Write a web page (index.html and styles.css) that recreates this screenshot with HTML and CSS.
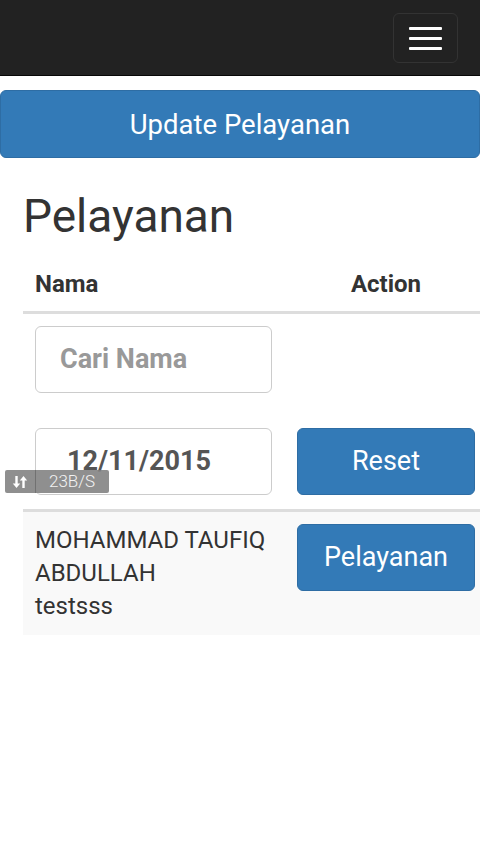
FILE: index.html
```html
<!DOCTYPE html>
<html>
<head>
<meta charset="utf-8">
<link rel="stylesheet" href="styles.css">
</head>
<body>
<nav class="navbar">
  <button class="toggle" aria-label="menu">
    <span class="bar"></span><span class="bar"></span><span class="bar"></span>
  </button>
</nav>
<button class="btn btn-block">Update Pelayanan</button>
<main class="container">
  <h1 class="title">Pelayanan</h1>
  <table class="table">
    <thead>
      <tr class="head-row">
        <th class="col-name">Nama</th>
        <th class="col-action">Action</th>
      </tr>
      <tr class="filter-row1">
        <td><input class="field" type="text" placeholder="Cari Nama"></td>
        <td></td>
      </tr>
      <tr class="filter-row2">
        <td><input class="field field-date" type="text" value="12/11/2015"></td>
        <td><button class="btn btn-row">Reset</button></td>
      </tr>
    </thead>
    <tbody>
      <tr class="data-row">
        <td class="name-cell">MOHAMMAD TAUFIQ<br>ABDULLAH<br>testsss</td>
        <td><button class="btn btn-row">Pelayanan</button></td>
      </tr>
    </tbody>
  </table>
</main>
<div class="netspeed">
  <span class="ns-icon">
    <svg width="16" height="14" viewBox="0 0 16 14" aria-hidden="true">
      <path d="M4.5 1v9" stroke="#fff" stroke-width="2.4" fill="none"/>
      <path d="M0.8 8.6L4.5 13L8.2 8.6Z" fill="#fff"/>
      <path d="M11.5 13V4" stroke="#fff" stroke-width="2.4" fill="none"/>
      <path d="M7.8 5.4L11.5 1L15.2 5.4Z" fill="#fff"/>
    </svg>
  </span>
  <span class="ns-text">23B/S</span>
</div>
</body>
</html>
```
FILE: styles.css
```css
html, body {
  margin: 0;
  padding: 0;
  background: #fff;
  overflow-x: hidden;
}
body {
  font-family: Roboto, "Noto Sans", sans-serif;
  color: #333;
  width: 480px;
  position: relative;
  min-height: 854px;
}
.navbar {
  height: 75px;
  background: #222;
  border-bottom: 1px solid #080808;
  display: flex;
  justify-content: flex-end;
  align-items: flex-start;
  padding-right: 22px;
}
.toggle {
  margin-top: 13px;
  width: 65px;
  height: 50px;
  background: transparent;
  border: 1px solid #333;
  border-radius: 6px;
  display: flex;
  flex-direction: column;
  align-items: center;
  justify-content: center;
  gap: 7px;
  padding: 0;
}
.bar {
  display: block;
  width: 33px;
  height: 3px;
  background: #fff;
  border-radius: 1px;
}
.btn {
  font-family: Roboto, "Noto Sans", sans-serif;
  background: #337ab7;
  border: 1px solid #2e6da4;
  color: #fff;
  border-radius: 6px;
  font-size: 27px;
  padding: 0;
  cursor: pointer;
}
.btn-block {
  display: block;
  width: 480px;
  height: 68px;
  margin-top: 14px;
  font-size: 27.5px;
}
.container {
  padding-left: 23px;
}
.title {
  margin: 33px 0 0;
  font-size: 46px;
  font-weight: 400;
  line-height: 1.1;
  color: #333;
}
.table {
  margin-top: 15px;
  width: 464px;
  border-collapse: collapse;
  border-spacing: 0;
  font-size: 24px;
}
.table th, .table td {
  padding: 12px;
  vertical-align: top;
  text-align: left;
}
.col-name { width: 238px; }
.col-action { text-align: center !important; }
.head-row th {
  font-weight: 700;
  line-height: 30px;
  border-bottom: 3px solid #ddd;
}
.filter-row1 td { padding-bottom: 12px; }
.filter-row2 td {
  padding-top: 23px;
  padding-bottom: 14px;
}
.field {
  box-sizing: border-box;
  width: 237px;
  height: 67px;
  border: 1px solid #ccc;
  border-radius: 6px;
  padding: 0 0 0 24px;
  font-family: Roboto, "Noto Sans", sans-serif;
  font-size: 27px;
  font-weight: 700;
  color: #555;
  display: block;
  background: #fff;
}
.field::placeholder { color: #999; }
.field-date { padding-left: 31px; }
.btn-row {
  width: 178px;
  height: 67px;
  display: block;
}
tbody {
  border-top: 3px solid #ddd;
}
.data-row { background: #f9f9f9; }
.data-row td { line-height: 33px; }
.name-cell { color: #333; }
.netspeed {
  position: absolute;
  left: 5px;
  top: 470px;
  width: 104px;
  height: 23px;
  background: rgba(128, 128, 128, 0.88);
  border-radius: 2px;
  display: flex;
  align-items: center;
  color: #f2f2f2;
  font-family: Roboto, sans-serif;
  font-size: 17px;
  font-weight: 300;
}
.ns-icon {
  width: 30px;
  height: 23px;
  display: flex;
  align-items: center;
  justify-content: center;
  border-right: 1px solid rgba(90, 90, 90, 0.5);
}
.ns-text {
  padding-left: 13px;
  line-height: 23px;
}
```
